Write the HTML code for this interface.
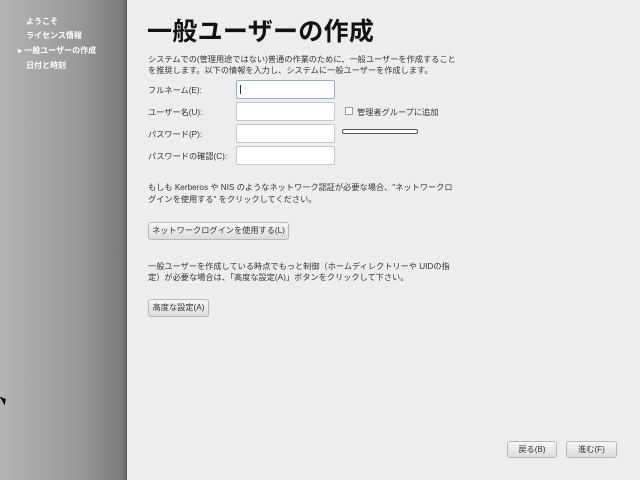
<!DOCTYPE html>
<html><head><meta charset="utf-8"><style>
body{margin:0;width:640px;height:480px;overflow:hidden;background:#ededed;font-family:"Liberation Sans","Noto Sans CJK JP",sans-serif;position:relative;color:#333}
.side{position:absolute;left:0;top:0;width:127px;height:480px;background:linear-gradient(to right,#b4b4b4,#9a9a9a 60%,#7a7a7a 97%,#5a5a5a)}
.side div{position:absolute;left:26px;font-size:8px;color:#fff;font-weight:bold}
.a{position:absolute;font-size:8.2px;color:#333;white-space:nowrap}
h1{position:absolute;left:147px;top:12px;margin:0;font-size:25px;font-weight:bold;color:#111;letter-spacing:0.3px}
.in{position:absolute;left:236px;width:97px;height:17px;border:1px solid #c8c8c8;background:#fff;border-radius:2px}
.btn{position:absolute;border:1px solid #b8b8b8;border-radius:3px;background:linear-gradient(#f6f6f6,#dcdcdc);font-size:8.2px;color:#333;text-align:center;box-sizing:border-box}
</style></head><body>
<div class="side">
<div style="top:16px">ようこそ</div>
<div style="top:30px">ライセンス情報</div>
<div style="top:45px;left:18px">▸ 一般ユーザーの作成</div>
<div style="top:60px">日付と時刻</div>
</div>
<h1>一般ユーザーの作成</h1>
<div class="a" style="left:148px;top:53px">システムでの(管理用途ではない)普通の作業のために、一般ユーザーを作成すること</div>
<div class="a" style="left:148px;top:64px">を推奨します。以下の情報を入力し、システムに一般ユーザーを作成します。</div>
<div class="a" style="left:148px;top:84px">フルネーム(E):</div>
<div class="a" style="left:148px;top:106px">ユーザー名(U):</div>
<div class="a" style="left:148px;top:128px">パスワード(P):</div>
<div class="a" style="left:148px;top:150px">パスワードの確認(C):</div>
<div class="in" style="top:80px;border-color:#8fb0d0"><div style="position:absolute;left:3px;top:4px;width:1px;height:9px;background:#333"></div></div>
<div class="in" style="top:102px"></div>
<div class="in" style="top:124px"></div>
<div class="in" style="top:146px"></div>
<div style="position:absolute;left:345px;top:107px;width:6px;height:6px;border:1px solid #999;background:#fff"></div>
<div class="a" style="left:357px;top:106px">管理者グループに追加</div>
<div style="position:absolute;left:342px;top:129px;width:74px;height:3px;border:1px solid #555;border-radius:2px;background:#fff"></div>
<div class="a" style="left:148px;top:181px">もしも Kerberos や NIS のようなネットワーク認証が必要な場合、"ネットワークロ</div>
<div class="a" style="left:148px;top:193px">グインを使用する" をクリックしてください。</div>
<div class="btn" style="left:148px;top:222px;width:141px;height:18px;line-height:16px">ネットワークログインを使用する(L)</div>
<div class="a" style="left:148px;top:260px">一般ユーザーを作成している時点でもっと制御（ホームディレクトリーや UIDの指</div>
<div class="a" style="left:148px;top:271px">定）が必要な場合は、「高度な設定(A)」ボタンをクリックして下さい。</div>
<div class="btn" style="left:148px;top:299px;width:61px;height:18px;line-height:16px">高度な設定(A)</div>
<div class="btn" style="left:507px;top:441px;width:50px;height:17px;line-height:15px">戻る(B)</div>
<div class="btn" style="left:566px;top:441px;width:51px;height:17px;line-height:15px">進む(F)</div>
<div style="position:absolute;left:2px;top:395px;width:0;height:0;border-left:4px solid #000;border-bottom:5px solid transparent;border-top:5px solid transparent;transform:rotate(-30deg)"></div>
</body></html>
